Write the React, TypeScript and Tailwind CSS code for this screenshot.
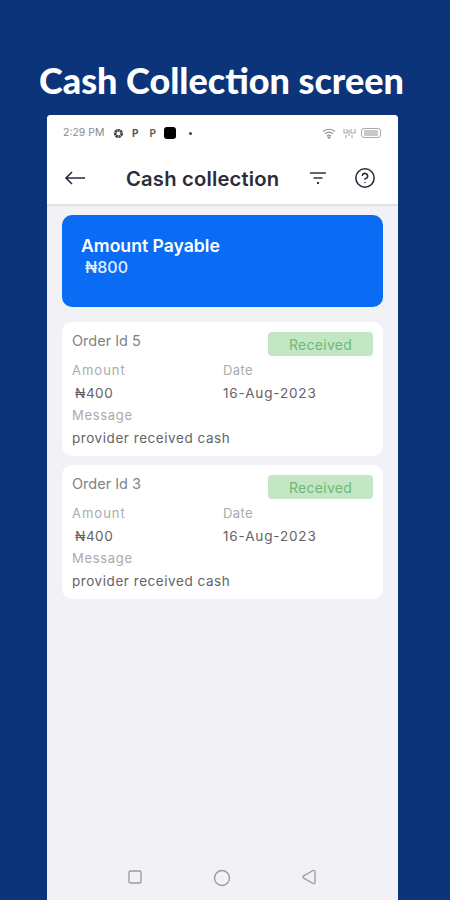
import { Circle, HelpCircle, Square, Triangle } from 'lucide-react';

const font = "font-['Inter',sans-serif]";

function OrderCard({ id }: { id: number }) {
  return (
    <div className="h-[134px] rounded-[10px] bg-white px-[10px] pt-[10px]">
      <div className="flex h-[28px] items-start justify-between">
        <span className="text-[14.5px] leading-[18px] text-[#828286]">Order Id {id}</span>
        <span className="flex h-6 w-[105px] items-center justify-center rounded-[4px] bg-[#c3e6c5] text-[14px] tracking-[0.3px] text-[#6fb974]">
          Received
        </span>
      </div>
      <div className="flex">
        <div className="w-[151px]">
          <p className="text-[13px] leading-[20px] tracking-[1px] text-[#aaaaae]">Amount</p>
          <p className="mt-[3px] pl-[3px] text-[13.5px] leading-[20px] tracking-[0.5px] text-[#636368]">₦400</p>
        </div>
        <div>
          <p className="text-[13px] leading-[20px] tracking-[0.4px] text-[#aaaaae]">Date</p>
          <p className="mt-[3px] text-[13.5px] leading-[20px] tracking-[0.85px] text-[#636368]">16-Aug-2023</p>
        </div>
      </div>
      <p className="mt-[2px] text-[13px] leading-[20px] tracking-[0.7px] text-[#aaaaae]">Message</p>
      <p className="mt-[3px] text-[13.5px] leading-[20px] tracking-[0.55px] text-[#636368]">provider received cash</p>
    </div>
  );
}

export default function App() {
  return (
    <div className={`flex h-[900px] w-[450px] flex-col overflow-hidden bg-[#0b347a] ${font}`}>
      <h1 className="ml-[39px] mt-[61px] h-[39px] whitespace-nowrap font-['Lato',sans-serif] text-[36px] font-black leading-[39px] text-white">
        Cash Collection screen
      </h1>
      <div className="ml-[47px] mt-[15px] flex h-[785px] w-[351px] flex-col overflow-hidden rounded-t-[4px] bg-[#f1f1f6]">
        {/* Status bar */}
        <div className="flex h-[36px] items-center justify-between bg-white pl-4 pr-[17px]">
          <div className="flex items-center">
            <span className="w-[50px] whitespace-nowrap text-[10.5px] text-[#8a8a8a]">2:29 PM</span>
            <svg width="11" height="11" viewBox="0 0 24 24" fill="none" stroke="#444" strokeWidth="6" strokeDasharray="5 1">
              <circle cx="12" cy="12" r="7" />
            </svg>
            <span className="ml-[8px] text-[10px] font-bold text-[#555]">P</span>
            <span className="ml-[11px] text-[10px] font-bold text-[#666]">P</span>
            <span className="ml-[8px] h-3 w-3 rounded-[3px] bg-black" />
            <span className="ml-[13px] h-[3px] w-[3px] rounded-full bg-[#444]" />
          </div>
          <div className="flex items-center gap-[5px]">
            <svg className="mr-[2px]" width="14" height="11" viewBox="0 0 14 11" fill="none" stroke="#999" strokeWidth="1.2">
              <path d="M1 3.5C4.5.5 9.5.5 13 3.5M3 5.7c2.4-2 5.6-2 8 0M5 7.8c1.2-.9 2.8-.9 4 0M7 10.5 6 9h2z" />
            </svg>
            <svg width="13" height="11" viewBox="0 0 13 11" fill="none" stroke="#aaa" strokeWidth="1.1">
              <path d="M1 1v4h3V1M8 1v4h4V1M3 7v3M9 7v3M6 2v6" />
            </svg>
            <div className="flex h-[10px] w-[20px] items-center justify-center rounded-[3px] border border-[#aaa]">
              <div className="h-[6px] w-[14px] rounded-[1px] bg-[#c9c9c9]" />
            </div>
          </div>
        </div>
        {/* App bar */}
        <div className="flex h-[55px] items-center border-b-2 border-[#e3e3e6] bg-white">
          <svg className="ml-[17px]" width="22" height="16" viewBox="0 0 22 16" fill="none" stroke="#2a2b3a" strokeWidth="1.6">
            <path d="M21 8H2M8 2 2 8l6 6" />
          </svg>
          <span className="ml-[40px] mt-[3px] w-[153px] whitespace-nowrap text-[20.2px] font-semibold tracking-[0.2px] text-[#2b2c3c]">
            Cash collection
          </span>
          <svg className="ml-[29px]" width="20" height="16" viewBox="0 0 20 16" fill="none" stroke="#33343f" strokeWidth="1.7">
            <path d="M2 3h16M5.5 8h9" />
            <path d="M9 13h2" strokeWidth="2.2" />
          </svg>
          <HelpCircle className="ml-[26px]" size={22} strokeWidth={1.7} color="#2a2b3a" />
        </div>
        {/* Content */}
        <div className="flex flex-1 flex-col px-[15px] pt-[9px]">
          <div className="flex h-[92px] flex-col rounded-[10px] bg-[#0a6cf5] pl-[19px] pt-[20px] text-white">
            <span className="text-[17.6px] font-semibold leading-[22px]">Amount Payable</span>
            <span className="pl-[4px] text-[16px] font-medium leading-[20px] text-[#e3eeff]">₦800</span>
          </div>
          <div className="mt-[15px] flex flex-col gap-[9px]">
            <OrderCard id={5} />
            <OrderCard id={3} />
          </div>
        </div>
        {/* Nav bar */}
        <div className="flex h-[47px] items-start justify-between pl-[80px] pr-[81px] pt-[16px]">
          <Square size={16} strokeWidth={2} color="#9a9a9f" />
          <Circle size={18} strokeWidth={1.8} color="#9a9a9f" />
          <Triangle size={16} strokeWidth={2} color="#9a9a9f" className="-rotate-90" />
        </div>
      </div>
    </div>
  );
}
